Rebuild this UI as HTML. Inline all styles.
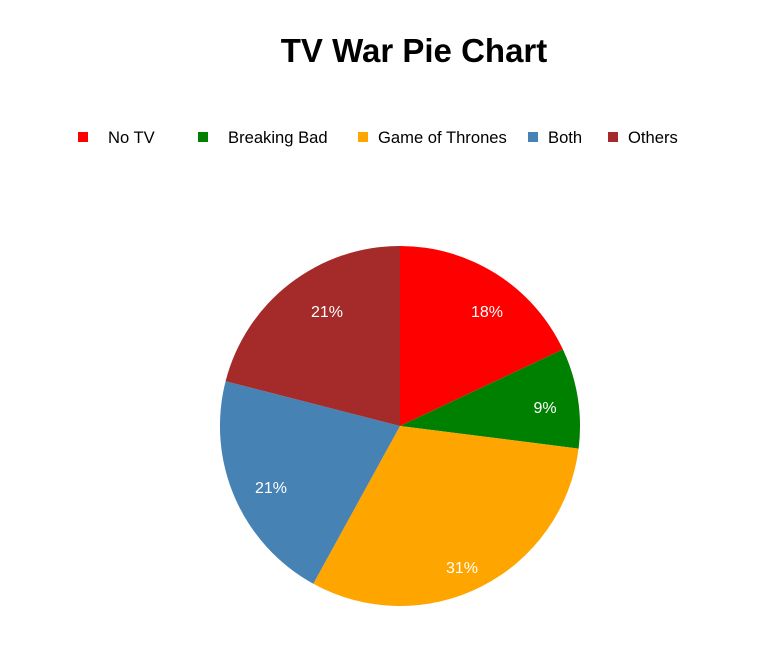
<!DOCTYPE html>
<html><head><style>
body{margin:0;background:#fff;width:762px;height:655px;overflow:hidden;font-family:"Liberation Sans",sans-serif}
</style></head><body>
<svg width="762" height="655" xmlns="http://www.w3.org/2000/svg" font-family="Liberation Sans, sans-serif">
<text x="414" y="62" text-anchor="middle" font-size="33" font-weight="bold" fill="#000">TV War Pie Chart</text>
<g font-size="16.6" fill="#000">
<rect x="78" y="132" width="10" height="10" fill="#ff0000"/><text x="108" y="143">No TV</text>
<rect x="198" y="132" width="10" height="10" fill="#008000"/><text x="228" y="143">Breaking Bad</text>
<rect x="358" y="132" width="10" height="10" fill="#ffa500"/><text x="378" y="143">Game of Thrones</text>
<rect x="528" y="132" width="10" height="10" fill="#4682b4"/><text x="548" y="143">Both</text>
<rect x="608" y="132" width="10" height="10" fill="#a52a2a"/><text x="628" y="143">Others</text>
</g>
<path d="M400,426 L400,246 A180,180 0 0 1 562.9,349.4 Z" fill="#ff0000"/>
<path d="M400,426 L562.9,349.4 A180,180 0 0 1 578.6,448.6 Z" fill="#008000"/>
<path d="M400,426 L578.6,448.6 A180,180 0 0 1 313.3,583.7 Z" fill="#ffa500"/>
<path d="M400,426 L313.3,583.7 A180,180 0 0 1 225.6,381.2 Z" fill="#4682b4"/>
<path d="M400,426 L225.6,381.2 A180,180 0 0 1 400,246 Z" fill="#a52a2a"/>
<g font-size="16" fill="#fff" text-anchor="middle">
<text x="487" y="317">18%</text>
<text x="545" y="413">9%</text>
<text x="462" y="573">31%</text>
<text x="271" y="493">21%</text>
<text x="327" y="317">21%</text>
</g>
</svg>
</body></html>
